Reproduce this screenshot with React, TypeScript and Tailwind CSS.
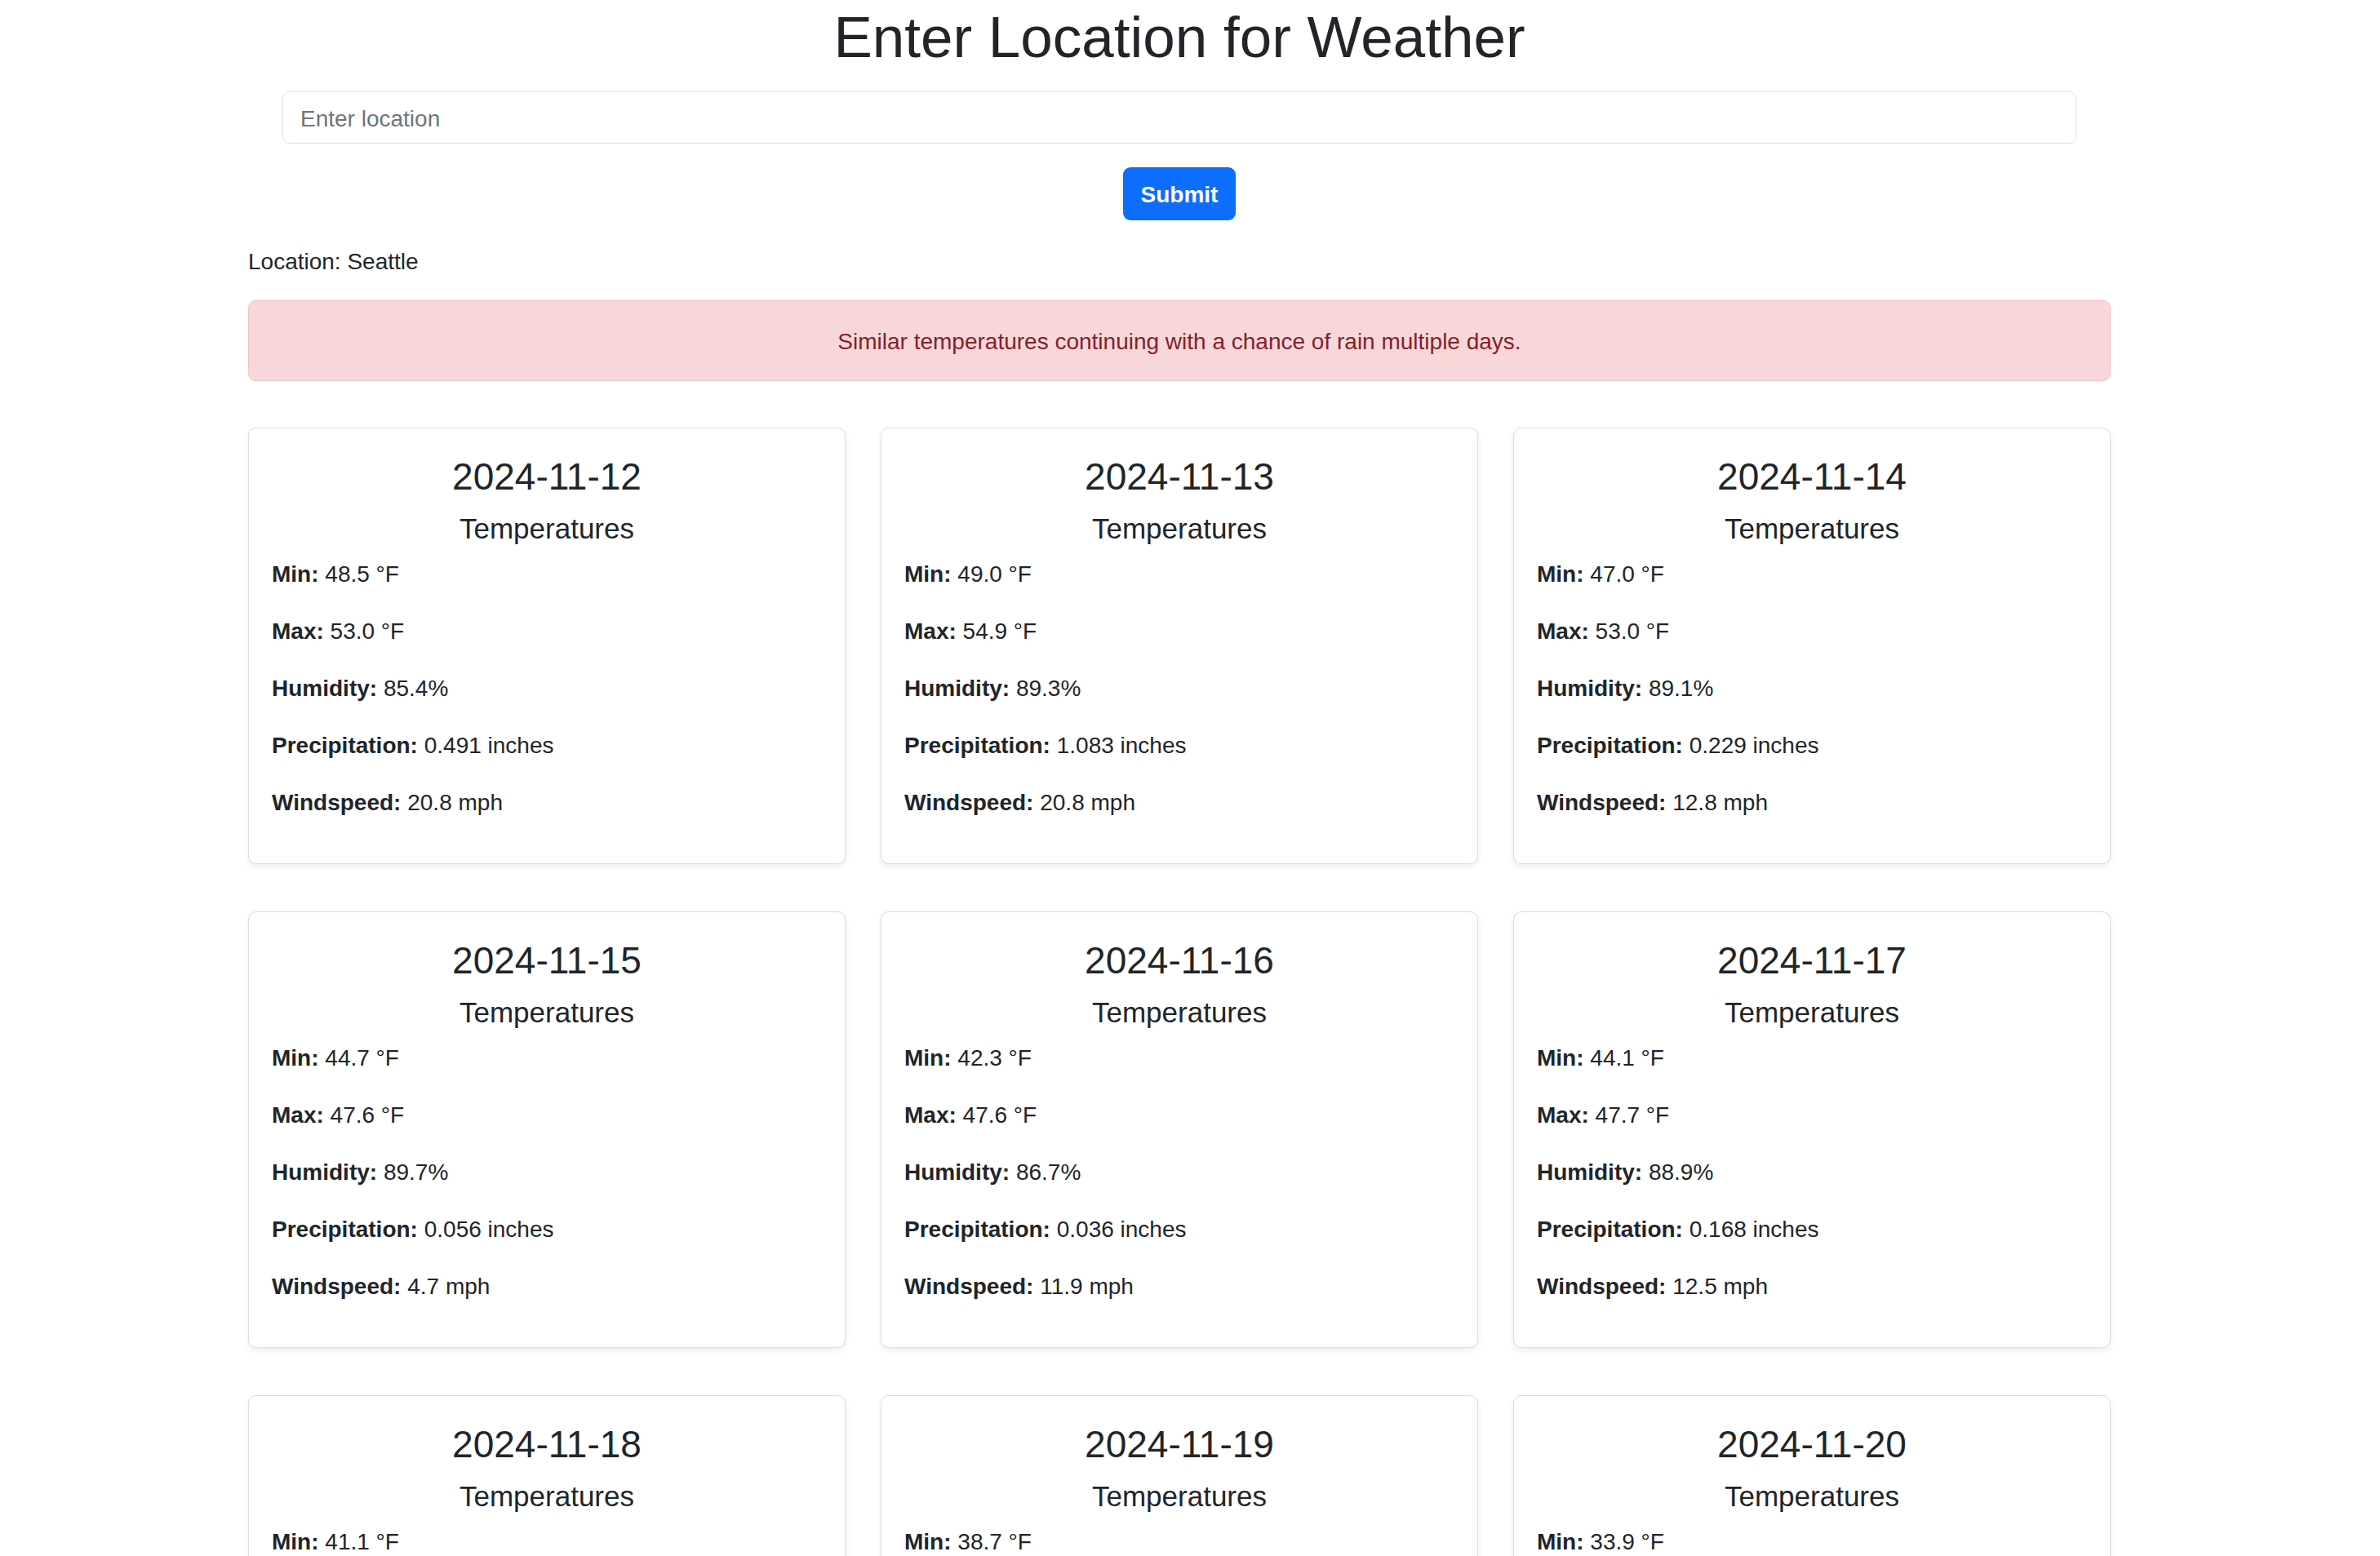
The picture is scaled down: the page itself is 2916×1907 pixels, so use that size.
import React from 'react';

type Day = {
  date: string;
  min: string;
  max: string;
  humidity: string;
  precip: string;
  wind: string;
};

const days: Day[] = [
  { date: '2024-11-12', min: '48.5', max: '53.0', humidity: '85.4', precip: '0.491', wind: '20.8' },
  { date: '2024-11-13', min: '49.0', max: '54.9', humidity: '89.3', precip: '1.083', wind: '20.8' },
  { date: '2024-11-14', min: '47.0', max: '53.0', humidity: '89.1', precip: '0.229', wind: '12.8' },
  { date: '2024-11-15', min: '44.7', max: '47.6', humidity: '89.7', precip: '0.056', wind: '4.7' },
  { date: '2024-11-16', min: '42.3', max: '47.6', humidity: '86.7', precip: '0.036', wind: '11.9' },
  { date: '2024-11-17', min: '44.1', max: '47.7', humidity: '88.9', precip: '0.168', wind: '12.5' },
  { date: '2024-11-18', min: '41.1', max: '46.2', humidity: '87.5', precip: '0.102', wind: '9.6' },
  { date: '2024-11-19', min: '38.7', max: '45.1', humidity: '84.2', precip: '0.014', wind: '7.3' },
  { date: '2024-11-20', min: '33.9', max: '44.8', humidity: '82.6', precip: '0.000', wind: '5.8' },
];

function Stat({ label, value }: { label: string; value: string }) {
  return (
    <p className="text-[28px] leading-[42px] mb-[28px]">
      <strong className="font-bold">{label}:</strong> {value}
    </p>
  );
}

function DayCard({ day }: { day: Day }) {
  return (
    <div className="bg-white border border-[#dcdcdc] rounded-[10px] shadow-[0_3px_7px_rgba(0,0,0,0.075)] px-[28px] pt-[28px] pb-[25px]">
      <h3 className="text-center text-[46px] leading-[62px]">{day.date}</h3>
      <h5 className="text-center text-[35px] leading-[42px] mt-[12px] mb-[14px]">Temperatures</h5>
      <Stat label="Min" value={`${day.min} °F`} />
      <Stat label="Max" value={`${day.max} °F`} />
      <Stat label="Humidity" value={`${day.humidity}%`} />
      <Stat label="Precipitation" value={`${day.precip} inches`} />
      <Stat label="Windspeed" value={`${day.wind} mph`} />
    </div>
  );
}

export default function App() {
  return (
    <div className="min-h-screen bg-white text-[#212529] font-['Liberation_Sans',Arial,sans-serif]">
      <div className="w-[2890px]">
        <div className="w-[2282px] mx-auto">
          {/* Search form */}
          <h1 className="text-center text-[71px] leading-[92px]">Enter Location for Weather</h1>
          <div className="px-[42px] mt-[20px]">
            <input
              type="text"
              placeholder="Enter location"
              className="w-full h-[64px] border border-[#dee2e6] rounded-[9px] px-[21px] pt-[3px] text-[28px] placeholder:text-[#6c757d] outline-none"
            />
          </div>
          <div className="flex justify-center mt-[29px]">
            <button className="h-[65px] px-[22px] pt-[3px] bg-[#0d6efd] text-white font-bold text-[28px] rounded-[9px]">
              Submit
            </button>
          </div>

          {/* Result */}
          <p className="text-[28px] leading-[42px] mt-[30px]">Location: Seattle</p>
          <div className="mt-[26px] h-[99px] flex items-center justify-center pt-[2px] bg-[#f8d7da] border border-[#f5c2c7] rounded-[9px] text-[#842029] text-[28px]">
            Similar temperatures continuing with a chance of rain multiple days.
          </div>

          <div className="grid grid-cols-3 gap-x-[43px] gap-y-[58px] mt-[57px] pb-[58px]">
            {days.map((d) => (
              <DayCard key={d.date} day={d} />
            ))}
          </div>
        </div>
      </div>
    </div>
  );
}
